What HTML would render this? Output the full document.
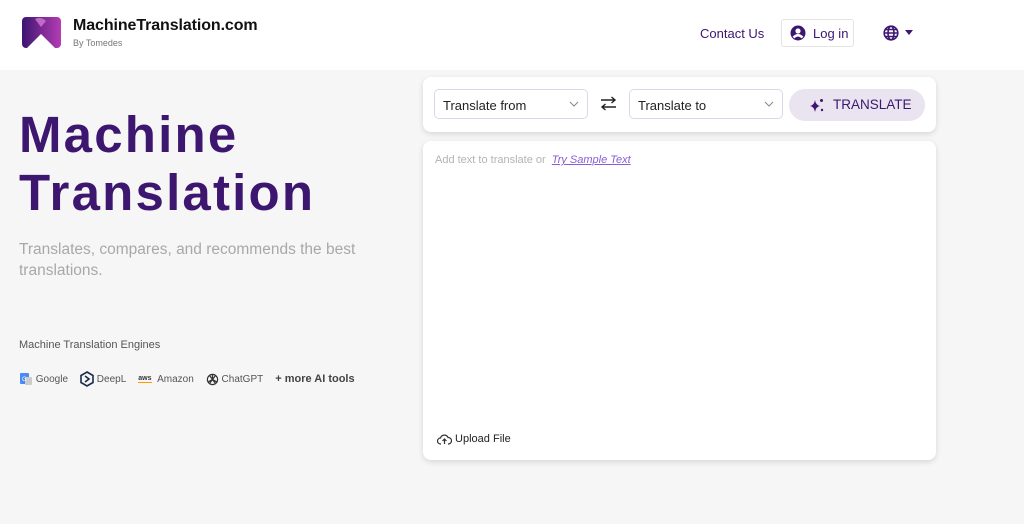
<!DOCTYPE html>
<html><head><meta charset="utf-8"><style>
*{margin:0;padding:0;box-sizing:border-box}
body{width:1024px;height:524px;background:#f6f6f6;font-family:"Liberation Sans",sans-serif;position:relative;overflow:hidden}
.hdr{position:absolute;left:0;top:0;width:1024px;height:70px;background:#fff}
.abs{position:absolute}
.card{background:#fff;border-radius:8px;box-shadow:0 2px 6px rgba(0,0,0,.13)}
.sel{position:absolute;top:12px;height:30px;border:1px solid #ddd6ea;border-radius:5px;font-size:13px;color:#222;padding:8px 8px}
.sel svg{position:absolute;right:8px;top:11px}
.eng{font-size:10px;color:#555;display:flex;align-items:center}
</style></head><body>
<div class="hdr">
 <svg class="abs" style="left:22px;top:17px" width="39" height="31" viewBox="0 0 39 31">
  <defs><linearGradient id="g" x1="0" x2="1"><stop offset="0" stop-color="#3d1670"/><stop offset="1" stop-color="#b43cb4"/></linearGradient></defs>
  <path d="M4 0H35A4 4 0 0 1 39 4V27A4 4 0 0 1 35 31H33L19 17L5 31H4A4 4 0 0 1 0 27V4A4 4 0 0 1 4 0Z" fill="url(#g)"/>
  <path d="M13 2Q19 -1 24 4L19 10Z" fill="#d27ad6" opacity=".8"/>
 </svg>
 <div class="abs" style="left:73px;top:17px;font-size:16px;font-weight:bold;color:#111;letter-spacing:-0.1px">MachineTranslation.com</div>
 <div class="abs" style="left:73px;top:38px;font-size:9px;color:#777">By Tomedes</div>
 <div class="abs" style="left:700px;top:26px;font-size:13px;color:#3d1670">Contact Us</div>
 <div class="abs" style="left:781px;top:19px;width:73px;height:28px;border:1px solid #e4e4e4;border-radius:3px;font-size:13px;color:#3d1670;padding:6px 0 0 31px">Log in
  <svg class="abs" style="left:8px;top:5px" width="16" height="16" viewBox="0 0 16 16"><circle cx="8" cy="8" r="7.5" fill="#3d1670"/><circle cx="8" cy="6" r="2.6" fill="#fff"/><path d="M3.5 12.5Q8 8 12.5 12.5" stroke="#fff" stroke-width="2.4" fill="none"/></svg></div>
 <svg class="abs" style="left:883px;top:25px" width="16" height="16" viewBox="0 0 16 16" fill="none" stroke="#3d1670" stroke-width="1.6"><circle cx="8" cy="8" r="6.8"/><ellipse cx="8" cy="8" rx="3" ry="6.8"/><path d="M1.2 8H14.8M2.5 4.5H13.5M2.5 11.5H13.5"/></svg>
 <svg class="abs" style="left:905px;top:30px" width="8" height="6"><path d="M0 0H8L4 5Z" fill="#3d1670"/></svg>
</div>

<div class="abs" style="left:19px;top:106px;font-size:51px;font-weight:bold;color:#3d1670;line-height:58px;letter-spacing:2.2px">Machine<br>Translation</div>
<div class="abs" style="left:19px;top:239px;font-size:15.5px;color:#a8a8a8;line-height:21px;width:350px">Translates, compares, and recommends the best translations.</div>
<div class="abs" style="left:19px;top:339px;font-size:11px;color:#555">Machine Translation Engines</div>
<div class="abs" style="left:19px;top:371px;display:flex;gap:12px;align-items:center">
 <div class="eng"><svg width="14" height="14" viewBox="0 0 14 14"><rect x="1" y="1" width="9" height="11" rx="1" fill="#4a8af4"/><rect x="6" y="5" width="7" height="8" rx="1" fill="#ccc"/><text x="3" y="9" font-size="6" fill="#fff">G</text></svg>&nbsp;Google</div>
 <div class="eng"><svg width="14" height="16" viewBox="0 0 14 16" fill="none" stroke="#1b2a4a" stroke-width="1.6"><path d="M7 1L13 4.5V11.5L7 15L1 11.5V4.5Z"/><path d="M5 5L9 8L5 11"/></svg>&nbsp;DeepL</div>
 <div class="eng"><span style="font-size:7px;font-weight:bold;color:#333;line-height:7px;border-bottom:1.5px solid #f90">aws</span>&nbsp;&nbsp;Amazon</div>
 <div class="eng"><svg width="13" height="13" viewBox="0 0 14 14" fill="none" stroke="#333" stroke-width="1.3"><circle cx="7" cy="7" r="5.5"/><path d="M7 1.5V7L11.5 9.5M7 7L2.5 9.5M4 3L10 11M10 3L4 11"/></svg>&nbsp;ChatGPT</div>
 <div class="eng" style="font-weight:bold;font-size:11px;color:#444">+ more AI tools</div>
</div>

<div class="abs card" style="left:423px;top:77px;width:513px;height:55px">
 <div class="sel" style="left:11px;width:154px">Translate from<svg width="10" height="6" viewBox="0 0 10 6"><path d="M1 1L5 5L9 1" stroke="#888" fill="none"/></svg></div>
 <svg class="abs" style="left:177px;top:19px" width="17" height="15" viewBox="0 0 17 15" fill="none" stroke="#222" stroke-width="1.4"><path d="M1 4H15M11.5 1L15 4L11.5 7M16 11H2M5.5 8L2 11L5.5 14"/></svg>
 <div class="sel" style="left:206px;width:154px">Translate to<svg width="10" height="6" viewBox="0 0 10 6"><path d="M1 1L5 5L9 1" stroke="#888" fill="none"/></svg></div>
 <div class="abs" style="left:366px;top:12px;width:136px;height:32px;border-radius:16px;background:#e9e4f0;color:#3d1670;font-size:13.5px;padding:8px 0 0 44px">TRANSLATE
  <svg class="abs" style="left:20px;top:8px" width="16" height="16" viewBox="0 0 16 16" fill="#3d1670"><path d="M6 3Q6.8 8.2 11 9Q6.8 9.8 6 15Q5.2 9.8 1 9Q5.2 8.2 6 3Z"/><circle cx="12.5" cy="3.5" r="1.5"/><circle cx="13" cy="13" r="1.2"/></svg></div>
</div>

<div class="abs card" style="left:423px;top:141px;width:513px;height:319px">
 <div class="abs" style="left:12px;top:13px;font-size:11px;color:#b3b3b3">Add text to translate or&nbsp;&nbsp;<span style="color:#8a5cd6;font-style:italic;text-decoration:underline">Try Sample Text</span></div>
 <div class="abs" style="left:14px;top:292px;font-size:11px;color:#222;display:flex;align-items:center"><svg width="15" height="12" viewBox="0 0 15 12" fill="none" stroke="#333" stroke-width="1.2"><path d="M4 11H3.5A3 3 0 0 1 3.5 5A4 4 0 0 1 11 4.5A3 3 0 0 1 11.5 11H11"/><path d="M7.5 11V6M5.5 8L7.5 6L9.5 8"/></svg>&nbsp;Upload File</div>
</div>
</body></html>
